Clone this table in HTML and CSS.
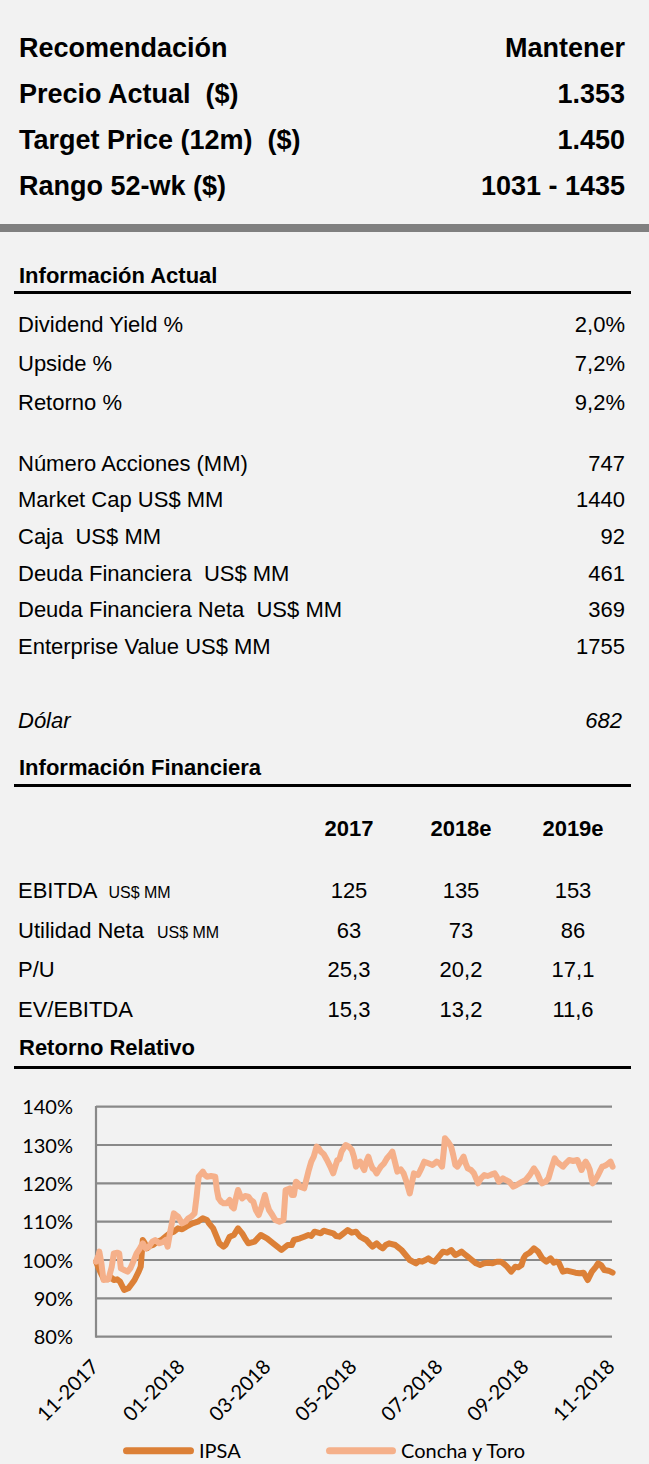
FILE: index.html
```html
<!DOCTYPE html>
<html lang="es">
<head>
<meta charset="utf-8">
<title>Concha y Toro</title>
<link rel="stylesheet" href="styles.css">
</head>
<body>
<div class="summary">
  <div class="kv"><span>Recomendación</span><span>Mantener</span></div>
  <div class="kv"><span>Precio Actual&nbsp; ($)</span><span>1.353</span></div>
  <div class="kv"><span>Target Price (12m)&nbsp; ($)</span><span>1.450</span></div>
  <div class="kv"><span>Rango 52-wk ($)</span><span>1031 - 1435</span></div>
</div>
<div class="divider"></div>

<h2 class="heading heading-actual">Información Actual</h2>
<div class="rows rows-wide">
  <div class="row"><span>Dividend Yield %</span><span>2,0%</span></div>
  <div class="row"><span>Upside %</span><span>7,2%</span></div>
  <div class="row"><span>Retorno %</span><span>9,2%</span></div>
</div>
<div class="rows rows-tight">
  <div class="row"><span>Número Acciones (MM)</span><span>747</span></div>
  <div class="row"><span>Market Cap US$ MM</span><span>1440</span></div>
  <div class="row"><span>Caja&nbsp; US$ MM</span><span>92</span></div>
  <div class="row"><span>Deuda Financiera&nbsp; US$ MM</span><span>461</span></div>
  <div class="row"><span>Deuda Financiera Neta&nbsp; US$ MM</span><span>369</span></div>
  <div class="row"><span>Enterprise Value US$ MM</span><span>1755</span></div>
</div>
<div class="rows rows-dolar">
  <div class="row row-italic"><span>Dólar</span><span class="italic-val">682</span></div>
</div>

<h2 class="heading heading-fin">Información Financiera</h2>
<div class="fin-table">
  <div class="fin-head"></div>
  <div class="fin-head fin-num">2017</div>
  <div class="fin-head fin-num">2018e</div>
  <div class="fin-head fin-num">2019e</div>

  <div class="fin-label">EBITDA<span class="unit unit-a">US$ MM</span></div>
  <div class="fin-num">125</div><div class="fin-num">135</div><div class="fin-num">153</div>

  <div class="fin-label">Utilidad Neta<span class="unit unit-b">US$ MM</span></div>
  <div class="fin-num">63</div><div class="fin-num">73</div><div class="fin-num">86</div>

  <div class="fin-label">P/U</div>
  <div class="fin-num">25,3</div><div class="fin-num">20,2</div><div class="fin-num">17,1</div>

  <div class="fin-label">EV/EBITDA</div>
  <div class="fin-num">15,3</div><div class="fin-num">13,2</div><div class="fin-num">11,6</div>
</div>

<h2 class="heading heading-ret">Retorno Relativo</h2>
<svg class="chart" width="649" height="395" viewBox="0 1069 649 395" xmlns="http://www.w3.org/2000/svg">
  <g class="grid">
    <line x1="96" y1="1106.7" x2="612" y2="1106.7"/>
    <line x1="96" y1="1145" x2="612" y2="1145"/>
    <line x1="96" y1="1183.3" x2="612" y2="1183.3"/>
    <line x1="96" y1="1221.7" x2="612" y2="1221.7"/>
    <line x1="96" y1="1260" x2="612" y2="1260"/>
    <line x1="96" y1="1298.3" x2="612" y2="1298.3"/>
    <line x1="96" y1="1336.7" x2="612" y2="1336.7"/>
    <line x1="96" y1="1106" x2="96" y2="1337.7"/>
  </g>
  <g class="ylabels">
    <text x="73" y="1114.2">140%</text>
    <text x="73" y="1152.5">130%</text>
    <text x="73" y="1190.8">120%</text>
    <text x="73" y="1229.2">110%</text>
    <text x="73" y="1267.5">100%</text>
    <text x="73" y="1305.8">90%</text>
    <text x="73" y="1344.2">80%</text>
  </g>
  <g class="xlabels">
    <text transform="translate(100 1368) rotate(-45)">11-2017</text>
    <text transform="translate(186 1368) rotate(-45)">01-2018</text>
    <text transform="translate(272 1368) rotate(-45)">03-2018</text>
    <text transform="translate(358 1368) rotate(-45)">05-2018</text>
    <text transform="translate(444 1368) rotate(-45)">07-2018</text>
    <text transform="translate(530 1368) rotate(-45)">09-2018</text>
    <text transform="translate(616 1368) rotate(-45)">11-2018</text>
  </g>
  <g transform="translate(0 1080) scale(0.41391 0.33333)">
    <polyline class="series series-ipsa" points="232,545 242,575 250,595 260,598 268,592 275,600 283,598 290,605 300,630 310,625 318,612 325,600 335,575 340,560 345,480 350,490 355,505 362,498 370,495 380,485 390,480 400,470 410,460 420,455 430,445 440,448 450,440 465,430 478,425 490,415 500,420 505,430 515,445 520,460 530,490 540,500 545,495 555,470 565,465 575,445 585,460 592,475 600,490 615,485 630,465 645,475 660,490 670,500 680,510 695,495 705,495 710,480 725,475 735,470 745,465 752,468 760,455 775,460 782,452 790,455 805,460 812,468 820,470 830,460 840,450 850,458 860,455 870,470 885,480 892,490 900,500 910,490 918,500 925,505 932,495 940,490 955,495 962,502 970,510 980,525 990,540 1005,550 1012,543 1020,545 1028,540 1035,535 1042,542 1050,545 1060,530 1070,515 1080,518 1090,510 1100,525 1108,520 1115,515 1122,522 1130,530 1140,540 1150,550 1160,555 1170,550 1180,548 1190,550 1200,545 1210,545 1218,552 1225,560 1235,575 1245,560 1252,562 1260,555 1265,535 1270,525 1280,518 1290,505 1300,515 1310,535 1320,545 1330,535 1338,548 1345,545 1350,548 1360,575 1370,572 1380,575 1390,578 1400,580 1410,578 1420,600 1430,575 1440,560 1445,550 1452,555 1460,570 1470,572 1480,578"/>
    <polyline class="series series-ct" points="232,545 238,525 240,515 245,550 250,600 262,598 270,560 275,520 283,518 288,520 292,565 300,570 308,575 315,565 322,545 330,520 338,505 345,490 352,505 360,500 368,485 375,480 385,490 395,485 400,480 405,500 412,450 420,400 425,405 430,410 440,430 448,425 455,415 462,410 470,400 475,350 480,290 490,275 495,285 500,290 510,288 520,290 524,330 528,355 534,365 540,370 548,370 555,360 560,380 565,385 570,355 575,330 580,345 585,355 592,348 600,350 606,360 612,365 618,390 625,405 632,380 640,345 645,370 650,390 658,405 665,420 675,425 685,420 690,330 695,328 700,325 705,345 710,345 715,305 720,310 725,320 735,325 740,300 745,275 752,245 758,230 765,200 770,205 775,215 782,222 790,240 798,260 805,280 810,260 815,240 820,238 825,215 830,205 835,195 843,200 850,210 855,230 860,260 865,250 870,245 875,258 880,270 885,245 890,230 895,250 900,265 905,270 910,280 915,270 920,260 928,250 935,235 942,225 948,215 954,245 960,275 968,268 975,280 982,305 990,340 995,310 1000,280 1005,283 1010,285 1018,265 1025,245 1035,250 1045,255 1050,250 1055,245 1062,250 1068,260 1072,215 1075,175 1082,185 1090,200 1095,225 1100,255 1105,260 1110,250 1115,240 1120,230 1125,250 1130,265 1138,270 1145,280 1150,295 1155,310 1162,295 1170,285 1178,288 1185,285 1190,282 1195,280 1200,290 1205,305 1210,300 1215,295 1222,300 1230,305 1235,312 1240,320 1248,315 1255,310 1262,305 1270,300 1280,285 1290,265 1298,280 1305,300 1310,310 1318,305 1325,295 1332,265 1340,235 1345,245 1350,250 1355,255 1360,260 1367,250 1375,240 1385,243 1395,240 1400,255 1405,270 1410,255 1415,245 1420,255 1425,270 1428,290 1432,310 1438,300 1445,285 1450,272 1455,260 1460,258 1465,255 1470,250 1475,245 1480,260"/>
  </g>
  <g class="legend">
    <line class="legend-line legend-ipsa" x1="126.5" y1="1450.7" x2="190.5" y2="1450.7"/>
    <text x="199" y="1457.7">IPSA</text>
    <line class="legend-line legend-ct" x1="329.5" y1="1450.7" x2="392.5" y2="1450.7"/>
    <text x="401" y="1457.7">Concha y Toro</text>
  </g>
</svg>
</body>
</html>
```

FILE: styles.css
```css
html, body {
  margin: 0;
  padding: 0;
}
body {
  background: #f2f2f2;
  color: #000;
  font-family: "Liberation Sans", Arial, sans-serif;
  width: 649px;
  overflow: hidden;
}

.summary {
  padding: 25px 24px 0 19px;
}
.kv {
  display: flex;
  justify-content: space-between;
  font-size: 27px;
  font-weight: bold;
  line-height: 46px;
  white-space: nowrap;
}

.divider {
  margin-top: 15px;
  height: 8px;
  background: #808080;
}

.heading {
  margin: 0 18px 0 14px;
  padding: 0 0 2px 5px;
  font-size: 22px;
  line-height: 26px;
  font-weight: bold;
  border-bottom: 3px solid #000;
}
.heading-actual { margin-top: 31.4px; }
.heading-fin { margin-top: 15.4px; padding-bottom: 3px; }
.heading-ret { margin-top: 5.5px; padding-bottom: 5px; }

.rows {
  padding: 0 24px 0 18px;
  font-size: 22px;
}
.rows-wide { margin-top: 10.8px; }
.rows-wide .row { line-height: 39px; }
.rows-tight { margin-top: 23.5px; }
.rows-tight .row { line-height: 36.67px; }
.rows-dolar { margin-top: 37.3px; }
.rows-dolar .row { line-height: 36.67px; }

.row {
  display: flex;
  justify-content: space-between;
  white-space: nowrap;
}
.row-italic {
  font-style: italic;
}
.italic-val {
  padding-right: 3px;
}

.fin-table {
  display: grid;
  grid-template-columns: 275px 112px 112px 112px;
  margin: 22.2px 0 0 18px;
  font-size: 22px;
  line-height: 39.67px;
}
.fin-head {
  font-weight: bold;
  margin-bottom: 21.9px;
}
.fin-num {
  text-align: center;
}
.fin-label {
  white-space: nowrap;
}
.unit {
  font-size: 16px;
  line-height: 1;
}
.unit-a { margin-left: 11px; }
.unit-b { margin-left: 13px; }

.chart {
  display: block;
}
.grid line {
  stroke: #898989;
  stroke-width: 2.2;
}
.ylabels text {
  font-family: Lato, "Open Sans", sans-serif;
  font-size: 20px;
  fill: #000;
  text-anchor: end;
}
.xlabels text {
  font-family: Lato, "Open Sans", sans-serif;
  font-size: 20px;
  fill: #000;
  text-anchor: end;
}
.legend text {
  font-family: Lato, "Open Sans", sans-serif;
  font-size: 20px;
  fill: #000;
}
.series {
  fill: none;
  stroke-width: 6px;
  stroke-linejoin: round;
  stroke-linecap: round;
  vector-effect: non-scaling-stroke;
}
.series-ipsa { stroke: #dc8037; }
.series-ct { stroke: #f5b08a; }
.legend-line {
  stroke-width: 7px;
  stroke-linecap: round;
}
.legend-ipsa { stroke: #dc8037; }
.legend-ct { stroke: #f5b08a; }
```
